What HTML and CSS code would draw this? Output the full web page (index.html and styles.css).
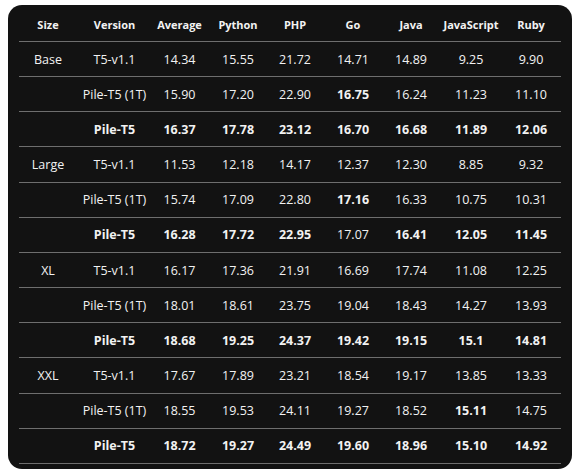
FILE: index.html
```html
<!DOCTYPE html>
<html>
<head>
<meta charset="utf-8">
<link rel="stylesheet" href="styles.css">
</head>
<body>
<div class="card">
<table class="results">
<colgroup>
<col class="c-size"><col class="c-version"><col class="c-avg"><col class="c-py"><col class="c-php"><col class="c-go"><col class="c-java"><col class="c-js"><col class="c-ruby">
</colgroup>
<thead>
<tr><th>Size</th><th>Version</th><th>Average</th><th>Python</th><th>PHP</th><th>Go</th><th>Java</th><th>JavaScript</th><th>Ruby</th></tr>
</thead>
<tbody>
<tr><td>Base</td><td>T5-v1.1</td><td>14.34</td><td>15.55</td><td>21.72</td><td>14.71</td><td>14.89</td><td>9.25</td><td>9.90</td></tr>
<tr><td></td><td>Pile-T5 (1T)</td><td>15.90</td><td>17.20</td><td>22.90</td><td class="b">16.75</td><td>16.24</td><td>11.23</td><td>11.10</td></tr>
<tr><td></td><td class="b">Pile-T5</td><td class="b">16.37</td><td class="b">17.78</td><td class="b">23.12</td><td class="b">16.70</td><td class="b">16.68</td><td class="b">11.89</td><td class="b">12.06</td></tr>
<tr><td>Large</td><td>T5-v1.1</td><td>11.53</td><td>12.18</td><td>14.17</td><td>12.37</td><td>12.30</td><td>8.85</td><td>9.32</td></tr>
<tr><td></td><td>Pile-T5 (1T)</td><td>15.74</td><td>17.09</td><td>22.80</td><td class="b">17.16</td><td>16.33</td><td>10.75</td><td>10.31</td></tr>
<tr><td></td><td class="b">Pile-T5</td><td class="b">16.28</td><td class="b">17.72</td><td class="b">22.95</td><td>17.07</td><td class="b">16.41</td><td class="b">12.05</td><td class="b">11.45</td></tr>
<tr><td>XL</td><td>T5-v1.1</td><td>16.17</td><td>17.36</td><td>21.91</td><td>16.69</td><td>17.74</td><td>11.08</td><td>12.25</td></tr>
<tr><td></td><td>Pile-T5 (1T)</td><td>18.01</td><td>18.61</td><td>23.75</td><td>19.04</td><td>18.43</td><td>14.27</td><td>13.93</td></tr>
<tr><td></td><td class="b">Pile-T5</td><td class="b">18.68</td><td class="b">19.25</td><td class="b">24.37</td><td class="b">19.42</td><td class="b">19.15</td><td class="b">15.1</td><td class="b">14.81</td></tr>
<tr><td>XXL</td><td>T5-v1.1</td><td>17.67</td><td>17.89</td><td>23.21</td><td>18.54</td><td>19.17</td><td>13.85</td><td>13.33</td></tr>
<tr><td></td><td>Pile-T5 (1T)</td><td>18.55</td><td>19.53</td><td>24.11</td><td>19.27</td><td>18.52</td><td class="b">15.11</td><td>14.75</td></tr>
<tr><td></td><td class="b">Pile-T5</td><td class="b">18.72</td><td class="b">19.27</td><td class="b">24.49</td><td class="b">19.60</td><td class="b">18.96</td><td class="b">15.10</td><td class="b">14.92</td></tr>
</tbody>
</table>
</div>
</body>
</html>
```

FILE: styles.css
```css
html, body {
  margin: 0;
  background: #ffffff;
}
body {
  padding: 5px 13px 5px 8px;
  font-family: "Open Sans", "Noto Sans", sans-serif;
}
.card {
  width: 564px;
  height: 464px;
  box-sizing: border-box;
  background: #121212;
  border-radius: 14px;
  padding: 0 11px 7px 11px;
}
.results {
  width: 542px;
  border-collapse: collapse;
  table-layout: fixed;
  color: #f2f2f2;
}
.c-size { width: 58px; }
.c-version { width: 75px; }
.c-avg { width: 55px; }
.c-py { width: 62px; }
.c-php { width: 52px; }
.c-go { width: 64px; }
.c-java { width: 52px; }
.c-js { width: 68px; }
.c-ruby { width: 56px; }
.results th,
.results td {
  padding: 0;
  text-align: center;
  white-space: nowrap;
  border-bottom: 1px solid #6e6e6e;
}
.results th:last-child,
.results td:last-child {
  padding-right: 4px;
}
.results th {
  height: 34px;
  padding-top: 2px;
  font-size: 11px;
  font-weight: 700;
}
.results td {
  height: 34.17px;
  font-size: 12.5px;
  font-weight: 400;
}
.results td.b {
  font-weight: 700;
}
```
